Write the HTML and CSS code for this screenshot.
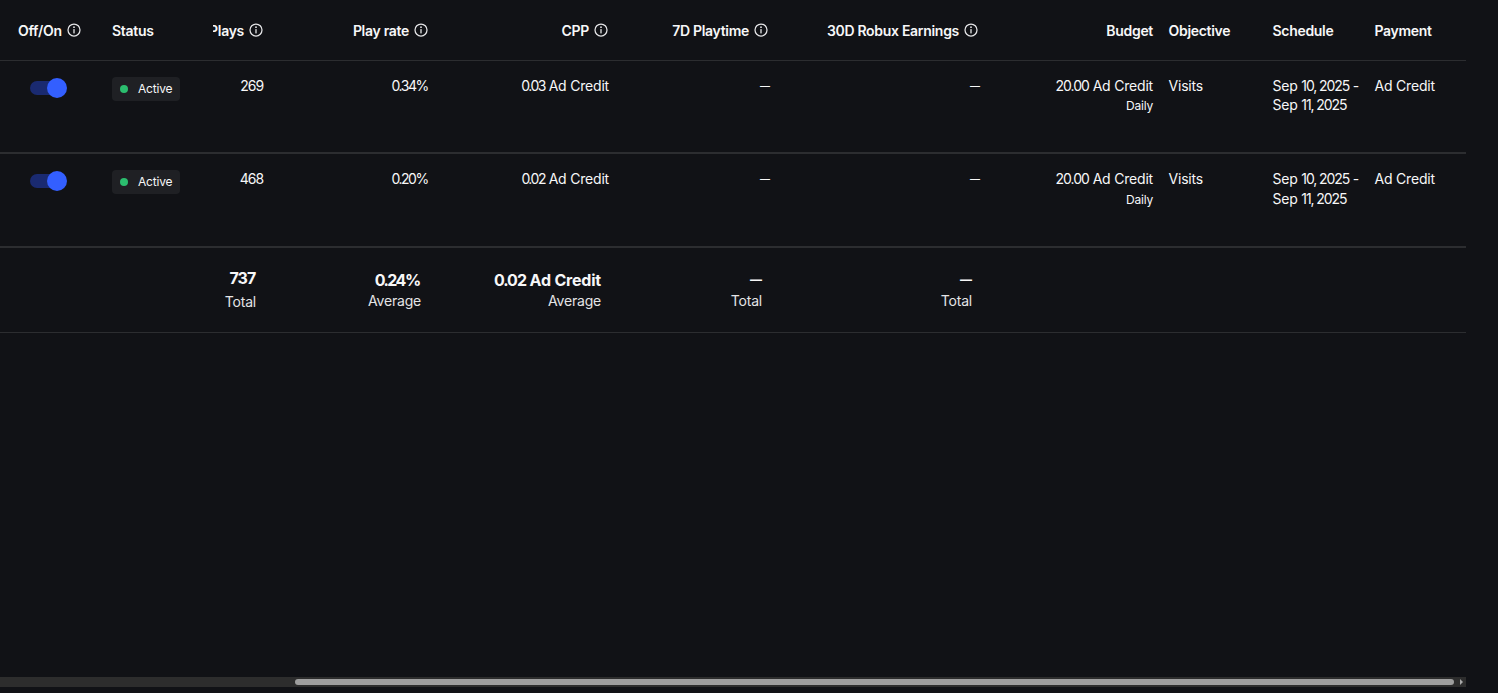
FILE: index.html
```html
<!DOCTYPE html>
<html lang="en">
<head>
<meta charset="utf-8">
<title>Ad campaigns</title>
<link rel="stylesheet" href="styles.css">
</head>
<body>
<svg class="sprite" width="0" height="0" aria-hidden="true">
  <symbol id="info" viewBox="0 0 14 14">
    <circle cx="7" cy="7" r="6" fill="none" stroke="currentColor" stroke-width="1.25"/>
    <rect x="6.35" y="6.1" width="1.3" height="4.3" fill="currentColor"/>
    <circle cx="7" cy="4.2" r="0.9" fill="currentColor"/>
  </symbol>
</svg>
<main class="app">
  <div class="table">
    <div class="row head">
      <div class="cell first">Off/On <svg class="info"><use href="#info"/></svg></div>
      <div class="cell">Status</div>
      <div class="cell num clip">Plays <svg class="info"><use href="#info"/></svg></div>
      <div class="cell num">Play rate <svg class="info"><use href="#info"/></svg></div>
      <div class="cell num">CPP <svg class="info"><use href="#info"/></svg></div>
      <div class="cell num wide">7D Playtime <svg class="info"><use href="#info"/></svg></div>
      <div class="cell num wide">30D Robux Earnings <svg class="info"><use href="#info"/></svg></div>
      <div class="cell num budget">Budget</div>
      <div class="cell">Objective</div>
      <div class="cell">Schedule</div>
      <div class="cell">Payment</div>
    </div>
    <div class="row body">
      <div class="cell first"><span class="toggle"><span class="knob"></span></span></div>
      <div class="cell"><span class="badge"><span class="dot"></span>Active</span></div>
      <div class="cell num"><span class="d">26</span>9</div>
      <div class="cell num"><span class="d2">0.34</span>%</div>
      <div class="cell num"><span class="d2">0.03</span> Ad Credit</div>
      <div class="cell num"><span class="dash">—</span></div>
      <div class="cell num"><span class="dash">—</span></div>
      <div class="cell num budget"><div><span class="d">20.00</span> Ad Credit</div><div class="small">Daily</div></div>
      <div class="cell">Visits</div>
      <div class="cell dates">Sep <span class="d3">10, 2025</span> -<br>Sep <span class="d3">11, 2025</span></div>
      <div class="cell">Ad Credit</div>
    </div>
    <div class="row body">
      <div class="cell first"><span class="toggle"><span class="knob"></span></span></div>
      <div class="cell"><span class="badge"><span class="dot"></span>Active</span></div>
      <div class="cell num"><span class="d">46</span>8</div>
      <div class="cell num"><span class="d2">0.20</span>%</div>
      <div class="cell num"><span class="d2">0.02</span> Ad Credit</div>
      <div class="cell num"><span class="dash">—</span></div>
      <div class="cell num"><span class="dash">—</span></div>
      <div class="cell num budget"><div><span class="d">20.00</span> Ad Credit</div><div class="small">Daily</div></div>
      <div class="cell">Visits</div>
      <div class="cell dates">Sep <span class="d3">10, 2025</span> -<br>Sep <span class="d3">11, 2025</span></div>
      <div class="cell">Ad Credit</div>
    </div>
    <div class="row foot">
      <div class="cell first"></div>
      <div class="cell"></div>
      <div class="cell total up"><b><span class="d">73</span>7</b><span>Total</span></div>
      <div class="cell total"><b><span class="d2">0.24</span>%</b><span>Average</span></div>
      <div class="cell total"><b><span class="d">0.02</span> Ad Credit</b><span>Average</span></div>
      <div class="cell total"><b class="bigdash">—</b><span>Total</span></div>
      <div class="cell total"><b class="bigdash">—</b><span>Total</span></div>
      <div class="cell"></div>
      <div class="cell"></div>
      <div class="cell"></div>
      <div class="cell"></div>
    </div>
  </div>
  <div class="scrollbar">
    <div class="thumb"></div>
    <div class="arrow"></div>
  </div>
</main>
</body>
</html>
```
FILE: styles.css
```css
* { box-sizing: border-box; }
html, body { margin: 0; height: 100%; }
body {
  background: #111216;
  color: #f7f7f8;
  font-family: "Inter", "Noto Sans", sans-serif;
  font-size: 14px;
  line-height: 19.6px;
  overflow: hidden;
}
.sprite { position: absolute; }
.app {
  width: 1466px;
  height: 693px;
  display: flex;
  flex-direction: column;
  justify-content: space-between;
  padding-bottom: 6px;
}
.row {
  display: grid;
  grid-template-columns: 104px 109px 59px 165px 180px 161px 210px 172.5px 104px 102px 99.5px;
}
.cell { padding: 0 8px; min-width: 0; }
.first { padding-left: 18px; }
.num { text-align: right; }
.budget { padding-right: 7.5px; }
.d { letter-spacing: -1px; }
.d2 { letter-spacing: -1.5px; }
.d3 { letter-spacing: -1.1px; }
.dash { font-size: 10px; font-weight: 500; letter-spacing: 0; vertical-align: 1.5px; }
.head {
  height: 60.75px;
  border-bottom: 1px solid #2c2d30;
  font-weight: 600;
  letter-spacing: -0.3px;
  align-items: center;
}
.head .cell { display: flex; align-items: center; gap: 5px; padding-top: 1px; }
.head .num { justify-content: flex-end; padding-right: 9px; }
.head .wide { padding-right: 10px; }
.head .budget { padding-right: 7.5px; }
.clip { overflow: hidden; white-space: nowrap; }
.info { width: 14px; height: 14px; color: #e6e6e8; flex: none; }
.body {
  height: 93.5px;
  border-bottom: 2px solid #2c2d30;
  padding-top: 15px;
  letter-spacing: -0.2px;
}
.small { font-size: 12px; margin-top: 1px; }
.dates { white-space: nowrap; }
.toggle {
  display: block;
  position: relative;
  width: 30px;
  height: 14px;
  margin: 5px 0 0 12px;
  border-radius: 7px;
  background: #1a2a70;
}
.knob {
  position: absolute;
  right: -7px;
  top: -3px;
  width: 20px;
  height: 20px;
  border-radius: 50%;
  background: #335fff;
}
.badge {
  display: inline-flex;
  align-items: center;
  height: 24px;
  margin-top: 1px;
  padding: 0 8px;
  gap: 10px;
  border-radius: 4px;
  background: #1f2024;
  font-size: 12px;
}
.dot { width: 8px; height: 8px; border-radius: 50%; background: #2bbd6e; }
.foot {
  height: 85px;
  border-bottom: 1px solid #2c2d30;
  padding-top: 22px;
}
.total {
  display: flex;
  flex-direction: column;
  align-items: flex-end;
  padding-right: 16px;
  white-space: nowrap;
  letter-spacing: -0.2px;
}
.total b { font-size: 16px; font-weight: 700; line-height: 20px; margin-bottom: 1px; }
.total .bigdash { font-size: 12px; letter-spacing: 0; }
.total > span { color: #e4e4e6; }
.up { margin-top: -2px; }
.up b { margin-bottom: 4px; }
.scrollbar {
  position: relative;
  height: 10px;
  background: #2d2d2d;
  display: flex;
  align-items: center;
  padding-left: 295px;
}
.thumb { width: 1159px; height: 6px; border-radius: 3px; background: #9e9e9e; }
.arrow {
  margin-left: 6px;
  width: 0;
  height: 0;
  border-left: 3px solid #a8a8a8;
  border-top: 3px solid transparent;
  border-bottom: 3px solid transparent;
}
```
